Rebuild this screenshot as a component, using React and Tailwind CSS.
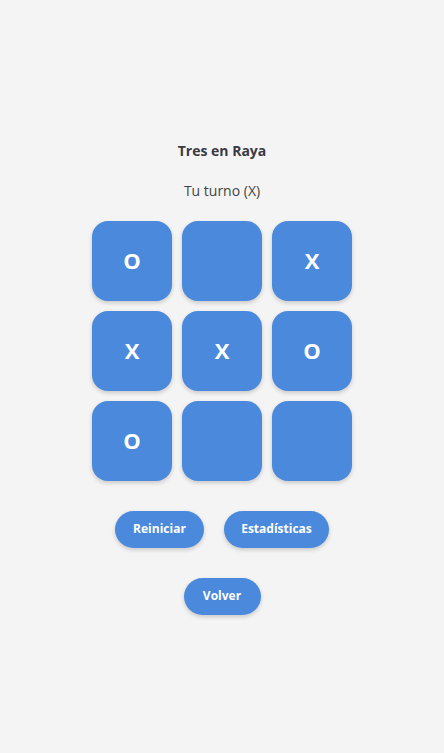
const board = ["O", "", "X", "X", "X", "O", "O", "", ""]

const Cell = ({ value }) => (
  <button
    type="button"
    className="flex h-20 w-20 items-center justify-center rounded-2xl bg-[#4a89dc] text-[22px] font-bold text-white shadow-[0_2px_4px_rgba(0,0,0,0.18)]"
  >
    {value}
  </button>
)

const PillButton = ({ className, children }) => (
  <button
    type="button"
    className={`h-[37px] rounded-full bg-[#4a89dc] text-[12px] font-bold text-white shadow-[0_2px_4px_rgba(0,0,0,0.18)] ${className}`}
  >
    {children}
  </button>
)

export default function App() {
  return (
    <div className="flex min-h-screen flex-col items-center justify-center bg-[#f4f4f4] pt-[2px] font-['Open_Sans',sans-serif] text-[#333]">
      <h1 className="text-[14px] font-bold leading-5 text-[#3a3a44]">Tres en Raya</h1>
      <p className="mt-5 text-[14px] leading-5 text-[#444]">Tu turno (X)</p>
      <div className="mt-5 grid grid-cols-3 gap-[10px]">
        {board.map((value, i) => (
          <Cell key={i} value={value} />
        ))}
      </div>
      <div className="mt-[30px] flex gap-5">
        <PillButton className="w-[89px]">Reiniciar</PillButton>
        <PillButton className="w-[105px]">Estadísticas</PillButton>
      </div>
      <div className="mt-[30px]">
        <PillButton className="w-[77px]">Volver</PillButton>
      </div>
    </div>
  )
}
